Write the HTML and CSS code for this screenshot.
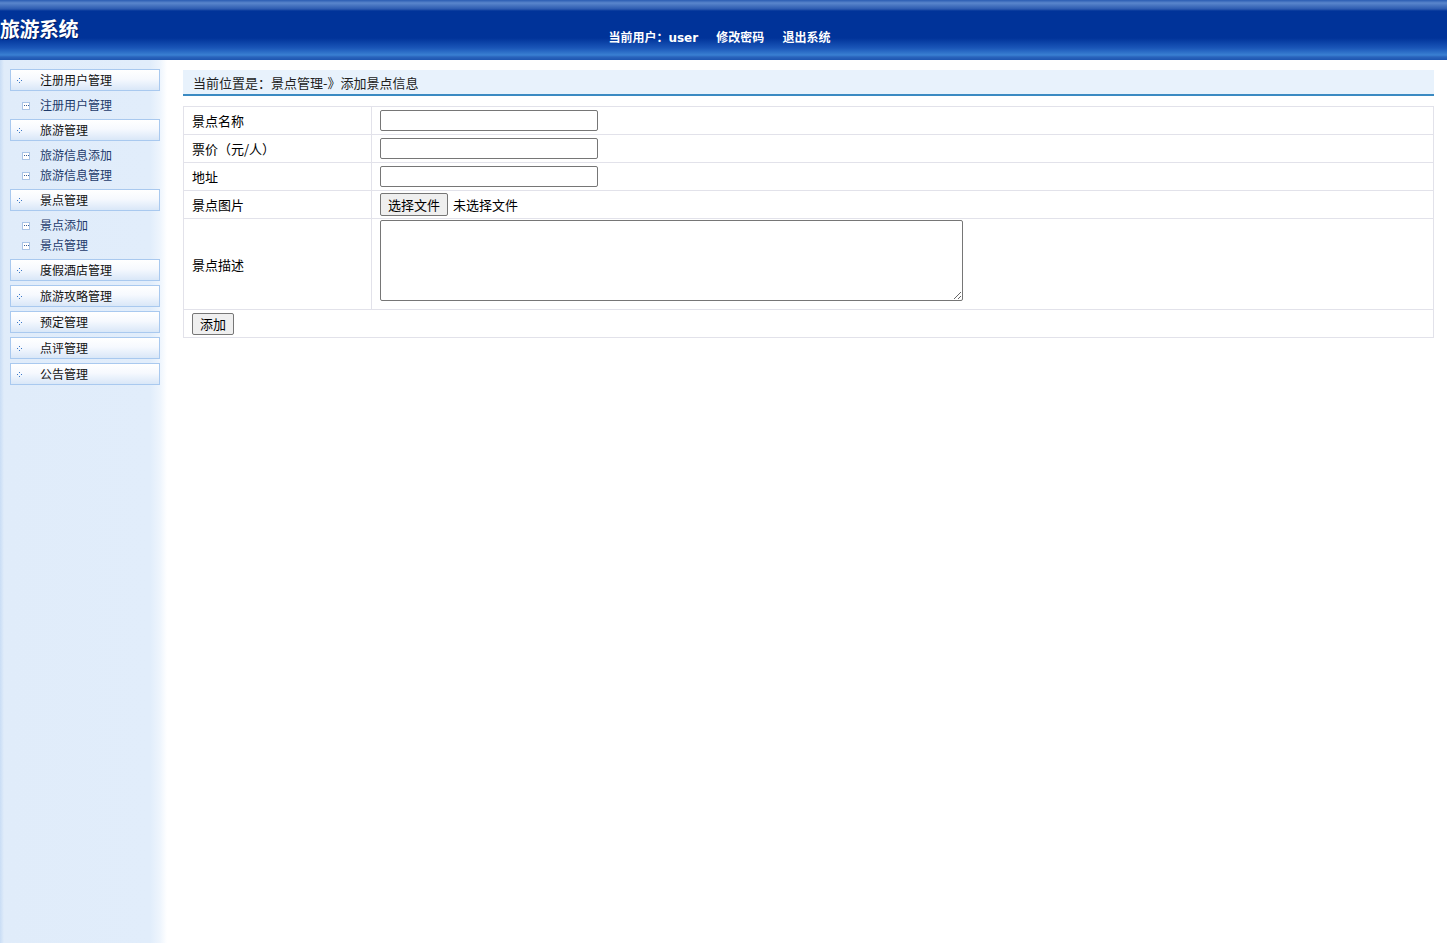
FILE: index.html
```html
<!DOCTYPE html>
<html>
<head>
    <meta charset="UTF-8">
    <title>旅游系统</title>
    <link rel="stylesheet" href="styles.css">
</head>
<body>
    <!-- 顶部 -->
    <div class="top">
        <div class="logo">旅游系统</div>
        <div class="top-links">
            <span>当前用户：user</span>
            <a href="#">修改密码</a>
            <a href="#">退出系统</a>
        </div>
        <div></div>
    </div>

    <div class="wrap">
        <!-- 左侧菜单 -->
        <div class="left">
            <div class="menu-title"><svg class="ico" width="5" height="5"><rect x="2" y="0" width="1" height="1"/><rect x="0" y="2" width="1" height="1"/><rect x="4" y="2" width="1" height="1"/><rect x="2" y="4" width="1" height="1"/></svg>注册用户管理</div>
            <ul class="sub">
                <li><i class="box"></i>注册用户管理</li>
            </ul>
            <div class="menu-title"><svg class="ico" width="5" height="5"><rect x="2" y="0" width="1" height="1"/><rect x="0" y="2" width="1" height="1"/><rect x="4" y="2" width="1" height="1"/><rect x="2" y="4" width="1" height="1"/></svg>旅游管理</div>
            <ul class="sub">
                <li><i class="box"></i>旅游信息添加</li>
                <li><i class="box"></i>旅游信息管理</li>
            </ul>
            <div class="menu-title"><svg class="ico" width="5" height="5"><rect x="2" y="0" width="1" height="1"/><rect x="0" y="2" width="1" height="1"/><rect x="4" y="2" width="1" height="1"/><rect x="2" y="4" width="1" height="1"/></svg>景点管理</div>
            <ul class="sub">
                <li><i class="box"></i>景点添加</li>
                <li><i class="box"></i>景点管理</li>
            </ul>
            <div class="menu-title"><svg class="ico" width="5" height="5"><rect x="2" y="0" width="1" height="1"/><rect x="0" y="2" width="1" height="1"/><rect x="4" y="2" width="1" height="1"/><rect x="2" y="4" width="1" height="1"/></svg>度假酒店管理</div>
            <div class="menu-title"><svg class="ico" width="5" height="5"><rect x="2" y="0" width="1" height="1"/><rect x="0" y="2" width="1" height="1"/><rect x="4" y="2" width="1" height="1"/><rect x="2" y="4" width="1" height="1"/></svg>旅游攻略管理</div>
            <div class="menu-title"><svg class="ico" width="5" height="5"><rect x="2" y="0" width="1" height="1"/><rect x="0" y="2" width="1" height="1"/><rect x="4" y="2" width="1" height="1"/><rect x="2" y="4" width="1" height="1"/></svg>预定管理</div>
            <div class="menu-title"><svg class="ico" width="5" height="5"><rect x="2" y="0" width="1" height="1"/><rect x="0" y="2" width="1" height="1"/><rect x="4" y="2" width="1" height="1"/><rect x="2" y="4" width="1" height="1"/></svg>点评管理</div>
            <div class="menu-title"><svg class="ico" width="5" height="5"><rect x="2" y="0" width="1" height="1"/><rect x="0" y="2" width="1" height="1"/><rect x="4" y="2" width="1" height="1"/><rect x="2" y="4" width="1" height="1"/></svg>公告管理</div>
        </div>

        <!-- 右侧内容 -->
        <div class="main">
            <div class="place">当前位置是：景点管理-》添加景点信息</div>
            <table class="form-table">
                <tr class="r28">
                    <td class="lbl">景点名称</td>
                    <td><input type="text" class="txt"></td>
                </tr>
                <tr class="r28">
                    <td class="lbl">票价（元/人）</td>
                    <td><input type="text" class="txt"></td>
                </tr>
                <tr class="r28">
                    <td class="lbl">地址</td>
                    <td><input type="text" class="txt"></td>
                </tr>
                <tr class="r28">
                    <td class="lbl">景点图片</td>
                    <td><button class="file-btn">选择文件</button><span class="file-tip">未选择文件</span></td>
                </tr>
                <tr class="r-area">
                    <td class="lbl">景点描述</td>
                    <td><textarea class="area"></textarea></td>
                </tr>
                <tr class="r28">
                    <td colspan="2"><button class="add-btn">添加</button></td>
                </tr>
            </table>
        </div>
    </div>
</body>
</html>
```

FILE: styles.css
```css
* {
    box-sizing: border-box;
}
body {
    margin: 0;
    font-family: "Noto Sans CJK SC", "Liberation Sans", sans-serif;
    font-size: 12px;
    color: #000;
    background: #fff;
}
/* 顶部 */
.top {
    height: 60px;
    display: grid;
    grid-template-columns: 1fr auto 1fr;
    color: #fff;
    background: linear-gradient(to bottom,
        #2a5cb2 0px, #5a86cc 3px, #2d5bb0 9px, #003399 11px,
        #003399 38px, #1a56b8 48px, #3a80d2 55px, #2a64bc 57px, #1d55b0 60px);
}
.logo {
    font-size: 20px;
    font-weight: bold;
    line-height: 58px;
    letter-spacing: -0.5px;
    text-shadow: 1px 1px 0 #001a66;
}
.top-links {
    padding-top: 30px;
    padding-right: 8px;
    font-family: "DejaVu Sans", "Noto Sans CJK SC", sans-serif;
    font-weight: bold;
    font-size: 12px;
    line-height: 16px;
    white-space: nowrap;
}
.top-links a {
    color: #fff;
    text-decoration: none;
    margin-left: 14px;
}
/* 主体 */
.wrap {
    display: flex;
    height: 883px;
}
.left {
    width: 167px;
    flex-shrink: 0;
    padding: 5px 0 0 10px;
    background: linear-gradient(to right,
        #c9ddf5 0px, #e0ecfa 4px, #e1edfb 150px, #eef5fd 160px, #ffffff 167px);
}
.menu-title {
    width: 150px;
    height: 22px;
    margin-top: 4px;
    border: 1px solid #a9c9ef;
    background: linear-gradient(to bottom, #ffffff 0%, #f6f9fe 45%, #d9e7f8 100%);
    line-height: 20px;
    padding-left: 29px;
    position: relative;
    color: #111;
}
.menu-title .ico {
    position: absolute;
    left: 6px;
    top: 8px;
    fill: #3a78c8;
}
.sub {
    list-style: none;
    margin: 0;
    padding: 4px 0 0 0;
}
.sub li {
    height: 20px;
    line-height: 20px;
    padding-left: 30px;
    color: #1d3a6a;
    position: relative;
}
.box {
    position: absolute;
    left: 12px;
    top: 7px;
    width: 8px;
    height: 8px;
    border: 1px solid #a9c4e6;
    background: #fff;
}
.box:after {
    content: "";
    position: absolute;
    left: 1px;
    top: 2px;
    width: 1px;
    height: 1px;
    background: #3a5f94;
    box-shadow: 2px 0 0 #3a5f94, 4px 0 0 #3a5f94;
}
.main {
    flex: 1;
    padding: 10px 13px 0 16px;
}
.place {
    height: 26px;
    line-height: 25px;
    padding-left: 10px;
    background: #e8f2fc;
    border-bottom: 2px solid #3b8ac2;
    font-size: 13px;
    color: #222;
}
.form-table {
    width: 100%;
    margin-top: 10px;
    border-collapse: collapse;
    border: 1px solid #e2e2ea;
    font-size: 13px;
}
.form-table td {
    border: 1px solid #e2e2ea;
    padding: 0 8px;
    vertical-align: middle;
}
.form-table td.lbl {
    width: 188px;
}
.r28 td {
    height: 28px;
}
.r-area td {
    height: 91px;
}
.txt {
    display: block;
    width: 218px;
    height: 21px;
    border: 1px solid #767676;
    border-radius: 2px;
    margin: 0;
}
.file-btn, .add-btn {
    font-family: "Noto Sans CJK SC", "Liberation Sans", sans-serif;
    font-size: 13px;
    height: 23px;
    padding: 0 7px;
    border: 1px solid #767676;
    border-radius: 2px;
    background: #efefef;
    color: #000;
    vertical-align: middle;
    line-height: 20px;
}
.file-tip {
    margin-left: 5px;
    vertical-align: middle;
}
.add-btn {
    height: 22px;
    padding: 0 7px;
}
.area {
    display: block;
    width: 583px;
    height: 81px;
    border: 1px solid #767676;
    border-radius: 2px;
    margin: 1px 0 8px 0;
}
```
